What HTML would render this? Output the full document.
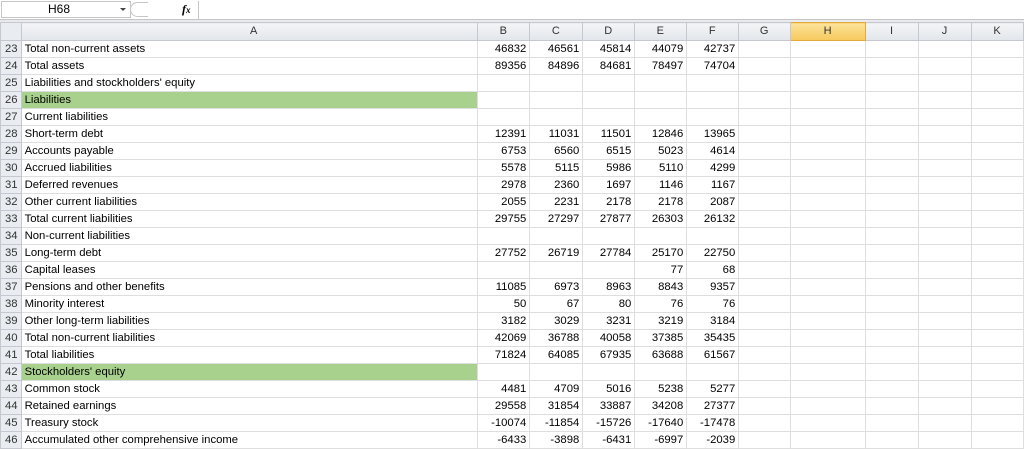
<!DOCTYPE html>
<html><head><style>
*{margin:0;padding:0;box-sizing:border-box}
body{width:1024px;height:447px;overflow:hidden;background:#fff;font-family:"Liberation Sans",sans-serif;font-size:11.3px;color:#000;position:relative}
#fb{position:absolute;left:0;top:0;width:1024px;height:20px;background:#fff;border-bottom:1px solid #c6c6c6}
#nb{position:absolute;left:1px;top:1px;width:130px;height:17px;border:1px solid #c6c6c6;font-size:12px;line-height:15px;padding-left:46px}
#arr{position:absolute;left:120px;top:8px;width:0;height:0;border-left:3px solid transparent;border-right:3px solid transparent;border-top:3px solid #444}
#fx{position:absolute;left:182px;top:2px;font-family:"Liberation Serif",serif;font-style:italic;font-weight:bold;font-size:12px}
#inp{position:absolute;left:198px;top:1px;right:0;height:18px;border-left:1px solid #c6c6c6}
#gap{position:absolute;left:0;top:20px;width:1024px;height:2px;background:#e8eaee}
table{position:absolute;left:0;top:22px;border-collapse:collapse;table-layout:fixed}
td{border:1px solid #dedede;height:17px;padding:0 3px 0 2px;white-space:nowrap;overflow:hidden;line-height:15px;vertical-align:bottom;text-align:right}
tr.h td{height:18px;background:linear-gradient(#f4f5f7,#e2e5ea);color:#333;text-align:center;border-color:#c5c8ce;vertical-align:middle;font-size:11px}
td.n{background:#e9ecf0;color:#333;text-align:left;padding-left:4px;border-color:#c5c8ce}
td.a{text-align:left;padding-left:3px}
td.g{background:#a9d18e}
td.hh{background:linear-gradient(#fce39a,#f6c95d)!important;border-color:#e3a93c!important}
</style></head><body>
<div id="fb"><div id="nb">H68</div><div id="arr"></div>
<div style="position:absolute;left:130px;top:2px;width:18px;height:15px;border:1px solid #c6c6c6;border-radius:8px 0 0 8px;border-right:none"></div>
<div id="fx">f<span style="font-size:9px">x</span></div><div id="inp"></div></div>
<div id="gap"></div>
<table>
<colgroup><col style="width:20px"><col style="width:457px"><col style="width:52px"><col style="width:53px"><col style="width:52px"><col style="width:52px"><col style="width:52px"><col style="width:52px"><col style="width:75px"><col style="width:53px"><col style="width:53px"><col style="width:52px"></colgroup>
<tr class="h"><td style="background:#e9ecf0"></td><td style="text-align:right;padding-right:220px">A</td><td>B</td><td>C</td><td>D</td><td>E</td><td>F</td><td>G</td><td class="hh">H</td><td>I</td><td>J</td><td>K</td></tr>
<tr><td class="n">23</td><td class="a">Total non-current assets</td><td>46832</td><td>46561</td><td>45814</td><td>44079</td><td>42737</td><td></td><td></td><td></td><td></td><td></td></tr>
<tr><td class="n">24</td><td class="a">Total assets</td><td>89356</td><td>84896</td><td>84681</td><td>78497</td><td>74704</td><td></td><td></td><td></td><td></td><td></td></tr>
<tr><td class="n">25</td><td class="a">Liabilities and stockholders' equity</td><td></td><td></td><td></td><td></td><td></td><td></td><td></td><td></td><td></td><td></td></tr>
<tr><td class="n">26</td><td class="a g">Liabilities</td><td></td><td></td><td></td><td></td><td></td><td></td><td></td><td></td><td></td><td></td></tr>
<tr><td class="n">27</td><td class="a">Current liabilities</td><td></td><td></td><td></td><td></td><td></td><td></td><td></td><td></td><td></td><td></td></tr>
<tr><td class="n">28</td><td class="a">Short-term debt</td><td>12391</td><td>11031</td><td>11501</td><td>12846</td><td>13965</td><td></td><td></td><td></td><td></td><td></td></tr>
<tr><td class="n">29</td><td class="a">Accounts payable</td><td>6753</td><td>6560</td><td>6515</td><td>5023</td><td>4614</td><td></td><td></td><td></td><td></td><td></td></tr>
<tr><td class="n">30</td><td class="a">Accrued liabilities</td><td>5578</td><td>5115</td><td>5986</td><td>5110</td><td>4299</td><td></td><td></td><td></td><td></td><td></td></tr>
<tr><td class="n">31</td><td class="a">Deferred revenues</td><td>2978</td><td>2360</td><td>1697</td><td>1146</td><td>1167</td><td></td><td></td><td></td><td></td><td></td></tr>
<tr><td class="n">32</td><td class="a">Other current liabilities</td><td>2055</td><td>2231</td><td>2178</td><td>2178</td><td>2087</td><td></td><td></td><td></td><td></td><td></td></tr>
<tr><td class="n">33</td><td class="a">Total current liabilities</td><td>29755</td><td>27297</td><td>27877</td><td>26303</td><td>26132</td><td></td><td></td><td></td><td></td><td></td></tr>
<tr><td class="n">34</td><td class="a">Non-current liabilities</td><td></td><td></td><td></td><td></td><td></td><td></td><td></td><td></td><td></td><td></td></tr>
<tr><td class="n">35</td><td class="a">Long-term debt</td><td>27752</td><td>26719</td><td>27784</td><td>25170</td><td>22750</td><td></td><td></td><td></td><td></td><td></td></tr>
<tr><td class="n">36</td><td class="a">Capital leases</td><td></td><td></td><td></td><td>77</td><td>68</td><td></td><td></td><td></td><td></td><td></td></tr>
<tr><td class="n">37</td><td class="a">Pensions and other benefits</td><td>11085</td><td>6973</td><td>8963</td><td>8843</td><td>9357</td><td></td><td></td><td></td><td></td><td></td></tr>
<tr><td class="n">38</td><td class="a">Minority interest</td><td>50</td><td>67</td><td>80</td><td>76</td><td>76</td><td></td><td></td><td></td><td></td><td></td></tr>
<tr><td class="n">39</td><td class="a">Other long-term liabilities</td><td>3182</td><td>3029</td><td>3231</td><td>3219</td><td>3184</td><td></td><td></td><td></td><td></td><td></td></tr>
<tr><td class="n">40</td><td class="a">Total non-current liabilities</td><td>42069</td><td>36788</td><td>40058</td><td>37385</td><td>35435</td><td></td><td></td><td></td><td></td><td></td></tr>
<tr><td class="n">41</td><td class="a">Total liabilities</td><td>71824</td><td>64085</td><td>67935</td><td>63688</td><td>61567</td><td></td><td></td><td></td><td></td><td></td></tr>
<tr><td class="n">42</td><td class="a g">Stockholders' equity</td><td></td><td></td><td></td><td></td><td></td><td></td><td></td><td></td><td></td><td></td></tr>
<tr><td class="n">43</td><td class="a">Common stock</td><td>4481</td><td>4709</td><td>5016</td><td>5238</td><td>5277</td><td></td><td></td><td></td><td></td><td></td></tr>
<tr><td class="n">44</td><td class="a">Retained earnings</td><td>29558</td><td>31854</td><td>33887</td><td>34208</td><td>27377</td><td></td><td></td><td></td><td></td><td></td></tr>
<tr><td class="n">45</td><td class="a">Treasury stock</td><td>-10074</td><td>-11854</td><td>-15726</td><td>-17640</td><td>-17478</td><td></td><td></td><td></td><td></td><td></td></tr>
<tr><td class="n">46</td><td class="a">Accumulated other comprehensive income</td><td>-6433</td><td>-3898</td><td>-6431</td><td>-6997</td><td>-2039</td><td></td><td></td><td></td><td></td><td></td></tr>
</table>
</body></html>
